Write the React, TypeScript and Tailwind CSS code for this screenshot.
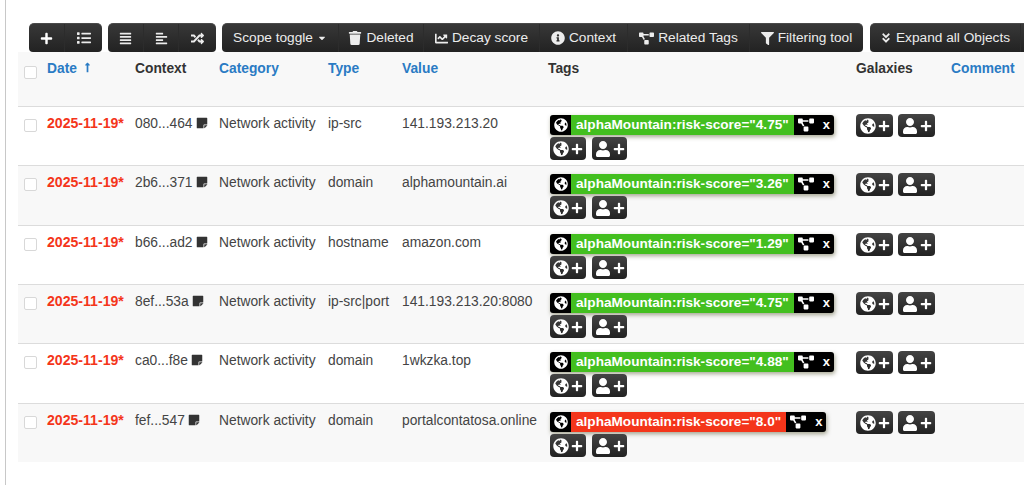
import { FaPlus, FaList, FaAlignJustify, FaAlignLeft, FaRandom, FaTrash, FaChartLine, FaInfoCircle, FaProjectDiagram, FaFilter, FaAngleDoubleDown, FaGlobeAmericas, FaUser, FaStickyNote, FaCaretDown, FaLongArrowAltUp } from "react-icons/fa";

const cols = "grid grid-cols-[29px_88px_84px_109px_74px_147px_307px_95px_1fr]";
const rows = [
  { ctx: "080...464", type: "ip-src", value: "141.193.213.20", score: "4.75", red: false, h: "h-[59px]" },
  { ctx: "2b6...371", type: "domain", value: "alphamountain.ai", score: "3.26", red: false, h: "h-[60px]" },
  { ctx: "b66...ad2", type: "hostname", value: "amazon.com", score: "1.29", red: false, h: "h-[59px]" },
  { ctx: "8ef...53a", type: "ip-src|port", value: "141.193.213.20:8080", score: "4.75", red: false, h: "h-[59px]" },
  { ctx: "ca0...f8e", type: "domain", value: "1wkzka.top", score: "4.88", red: false, h: "h-[60px]" },
  { ctx: "fef...547", type: "domain", value: "portalcontatosa.online", score: "8.0", red: true, h: "h-[58px]" },
];

function Btn({ children, className = "" }: { children: React.ReactNode; className?: string }) {
  return (
    <div className={`flex items-center justify-center gap-[4px] h-full text-[13.7px] text-[#ececec] border-l border-[#2c2c2c] first:border-l-0 ${className}`}>
      {children}
    </div>
  );
}

function Group({ children, className = "" }: { children: React.ReactNode; className?: string }) {
  return (
    <div className={`flex h-[29px] rounded-t-[5px] rounded-b-[4px] bg-gradient-to-b from-[#383838] to-[#222222] border-t border-[#4a4a4a] ${className}`}>
      {children}
    </div>
  );
}

function AddButtons({ className = "", wide = false }: { className?: string; wide?: boolean }) {
  const b = "flex items-center justify-center gap-[2px] h-[23px] rounded-[4px] bg-gradient-to-b from-[#444444] to-[#222222] text-white";
  return (
    <div className={`flex ${wide ? "gap-[5px]" : "gap-[6px]"} ${className}`}>
      <div className={`${b} ${wide ? "w-[37px]" : "w-[36px]"}`}>
        <FaGlobeAmericas className="text-[16px]" />
        <FaPlus className="text-[12px]" />
      </div>
      <div className={`${b} ${wide ? "w-[37px]" : "w-[35px]"}`}>
        <FaUser className="text-[16px]" />
        <FaPlus className="text-[12px]" />
      </div>
    </div>
  );
}

function Tag({ score, red }: { score: string; red: boolean }) {
  return (
    <div className="flex w-fit h-[20px] rounded-[3px] overflow-hidden bg-black text-white shadow-[1px_2px_4px_rgba(80,80,40,0.5)]">
      <div className="w-[21px] flex items-center justify-center">
        <FaGlobeAmericas className="text-[14px]" />
      </div>
      <div className={`flex items-center px-[5px] text-[13.6px] font-bold whitespace-nowrap ${red ? "bg-[#f4351a]" : "bg-[#43bf1f]"}`}>
        alphaMountain:risk-score="{score}"
      </div>
      <div className="flex items-center pl-[4px] pr-[4px]">
        <FaProjectDiagram className="text-[16px]" />
        <span className="ml-[9px] text-[13px] font-bold">x</span>
      </div>
    </div>
  );
}

export default function App() {
  return (
    <div className="h-[485px] overflow-hidden bg-white text-[13.8px] text-[#444] font-['Liberation_Sans',Arial,sans-serif]">
      <div className="ml-[5px] h-full border-l border-[#c8c8c8] pl-[12px] pt-[23px]">
        <div className="flex gap-[6px] pl-[11px] h-[29px] w-[1100px]">
          <Group>
            <Btn className="w-[35px]"><FaPlus className="text-[13px] text-white" /></Btn>
            <Btn className="w-[38px]"><FaList className="text-[14px]" /></Btn>
          </Group>
          <Group>
            <Btn className="w-[35px]"><FaAlignJustify className="text-[13px]" /></Btn>
            <Btn className="w-[35px]"><FaAlignLeft className="text-[13px]" /></Btn>
            <Btn className="w-[38px]"><FaRandom className="text-[13px]" /></Btn>
          </Group>
          <Group>
            <Btn className="w-[116px]">Scope toggle <FaCaretDown className="text-[10px]" /></Btn>
            <Btn className="w-[85px]"><FaTrash className="text-[14px]" /> Deleted</Btn>
            <Btn className="w-[116px]"><FaChartLine className="text-[13px]" /> Decay score</Btn>
            <Btn className="w-[88px]"><FaInfoCircle className="text-[14px]" /> Context</Btn>
            <Btn className="w-[122px]"><FaProjectDiagram className="text-[15px]" /> Related Tags</Btn>
            <Btn className="w-[114px]"><FaFilter className="text-[13px]" /> Filtering tool</Btn>
          </Group>
          <Group className="ml-[1px]">
            <Btn className="w-[150px]"><FaAngleDoubleDown className="text-[12px]" /> Expand all Objects</Btn>
            <Btn className="w-[60px]"> </Btn>
          </Group>
        </div>

        <div className={`${cols} h-[55px] bg-[#f8f8f8] border-b border-[#dcdcdc] pt-[9px] font-bold text-[#333] leading-[16px]`}>
          <div className="pl-[6px] pt-[5px]">
            <div className="w-[13px] h-[13px] border border-[#d8d8d8] rounded-[2px] bg-white" />
          </div>
          <div className="flex items-start gap-[5px] text-[#2a7bc4]">Date <FaLongArrowAltUp className="text-[11px] mt-[1px]" /></div>
          <div>Context</div>
          <div className="text-[#2a7bc4]">Category</div>
          <div className="text-[#2a7bc4]">Type</div>
          <div className="text-[#2a7bc4]">Value</div>
          <div className="-ml-[1px]">Tags</div>
          <div>Galaxies</div>
          <div className="text-[#2a7bc4]">Comment</div>
        </div>

        {rows.map((r, i) => (
          <div key={r.ctx} className={`${cols} ${r.h} ${i % 2 ? "bg-[#f8f8f8]" : "bg-white"} border-b ${i === 5 ? "border-transparent" : "border-[#dcdcdc]"} pt-[8px] leading-[16px]`}>
            <div className="pl-[6px] pt-[4px]">
              <div className="w-[13px] h-[13px] border border-[#d8d8d8] rounded-[2px] bg-white" />
            </div>
            <div className="font-bold text-[14.1px] text-[#f4351a]">2025-11-19*</div>
            <div className="pt-[1px] flex items-start gap-[3px]">{r.ctx} <FaStickyNote className="text-[12px] mt-[1px] text-[#333]" /></div>
            <div className="pt-[1px]">Network activity</div>
            <div className="pt-[1px]">{r.type}</div>
            <div className="pt-[1px]">{r.value}</div>
            <div className="pl-[1px] flex flex-col gap-[2px]">
              <Tag score={r.score} red={r.red} />
              <AddButtons />
            </div>
            <div><AddButtons wide className="-mt-[1px]" /></div>
            <div />
          </div>
        ))}
      </div>
    </div>
  );
}
